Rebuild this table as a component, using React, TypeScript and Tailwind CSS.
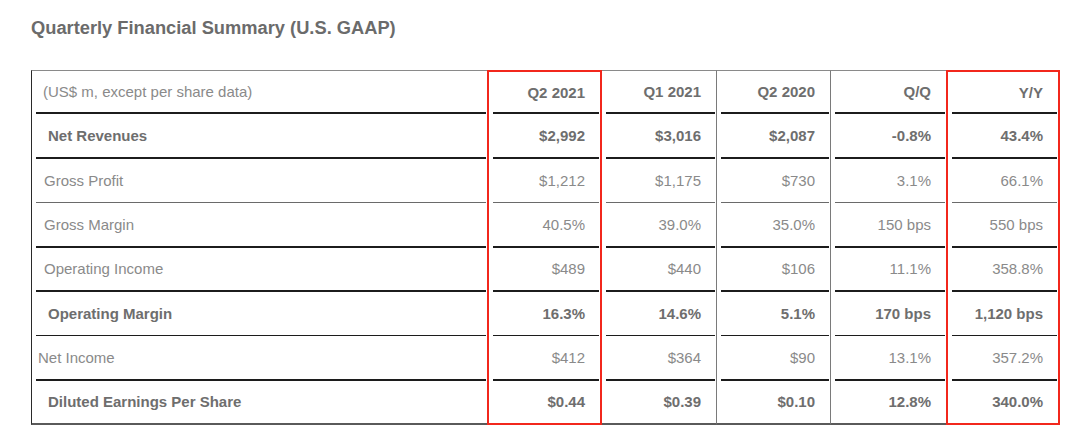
import React from 'react'

type Row = {
  label: string
  values: string[]
  bold?: boolean
  indent: string
  line: string
}

const columns = ['Q2 2021', 'Q1 2021', 'Q2 2020', 'Q/Q', 'Y/Y']

const rows: Row[] = [
  { label: '(US$ m, except per share data)', values: columns, bold: true, indent: 'pl-[7px]', line: 'border-b-2 border-[#1c1c1c]' },
  { label: 'Net Revenues', values: ['$2,992', '$3,016', '$2,087', '-0.8%', '43.4%'], bold: true, indent: 'pl-[12px]', line: 'border-b-2 border-[#1c1c1c]' },
  { label: 'Gross Profit', values: ['$1,212', '$1,175', '$730', '3.1%', '66.1%'], indent: 'pl-[8px]', line: 'border-b border-[#6a6a6a]' },
  { label: 'Gross Margin', values: ['40.5%', '39.0%', '35.0%', '150 bps', '550 bps'], indent: 'pl-[8px]', line: 'border-b-2 border-[#1c1c1c]' },
  { label: 'Operating Income', values: ['$489', '$440', '$106', '11.1%', '358.8%'], indent: 'pl-[8px]', line: 'border-b-2 border-[#1c1c1c]' },
  { label: 'Operating Margin', values: ['16.3%', '14.6%', '5.1%', '170 bps', '1,120 bps'], bold: true, indent: 'pl-[12px]', line: 'border-b border-[#1c1c1c]' },
  { label: 'Net Income', values: ['$412', '$364', '$90', '13.1%', '357.2%'], indent: 'pl-[2px]', line: 'border-b-2 border-[#1c1c1c]' },
  { label: 'Diluted Earnings Per Share', values: ['$0.44', '$0.39', '$0.10', '12.8%', '340.0%'], bold: true, indent: 'pl-[12px]', line: '' },
]

// side borders per column; the red ones mark the highlighted columns
const colSides = [
  'border-l border-l-[#2a2a2a]',
  'border-x-2 border-x-[#f2271c]',
  'border-r border-r-[#7a7a7a]',
  'border-r border-r-[#7a7a7a]',
  '',
  'border-x-2 border-x-[#f2271c]',
]

const isRed = (c: number) => c === 1 || c === 5

export default function App() {
  return (
    <div className="min-h-screen bg-white px-[31px] pt-[17px] font-['Liberation_Sans',Arial,sans-serif]">
      <h1 className="text-[18.3px] leading-[22px] font-bold text-[#6b6b6b]">Quarterly Financial Summary (U.S. GAAP)</h1>

      <div className="mt-[31px] grid w-[1029px] grid-cols-[456px_115px_115px_114px_115px_114px]">
        {rows.map((row, r) => {
          const cells = [row.label, ...row.values]
          const last = r === rows.length - 1
          return cells.map((text, c) => {
            const top = r === 0 ? (isRed(c) ? 'border-t-2 border-t-[#f2271c]' : 'border-t border-t-[#8a8a8a]') : ''
            const bottom = last ? (isRed(c) ? 'border-b-2 border-b-[#f2271c]' : 'border-b-2 border-b-[#5a5a5a]') : ''
            const color = row.bold ? 'font-bold text-[#6e6e6e]' : 'text-[#8a8a8a]'
            const headLabel = r === 0 && c === 0 ? 'font-normal text-[#8a8a8a]' : color
            return (
              <div key={`${r}-${c}`} className={`flex h-[44.4px] flex-col ${colSides[c]} ${top} ${bottom}`}>
                <div className={`ml-1 mr-px flex flex-1 items-center ${row.line}`}>
                  <span
                    className={`w-full text-[15px] leading-none ${headLabel} ${c === 0 ? `text-left ${row.indent}` : 'pr-[14px] text-right'}`}
                  >
                    {text}
                  </span>
                </div>
              </div>
            )
          })
        })}
      </div>
    </div>
  )
}
